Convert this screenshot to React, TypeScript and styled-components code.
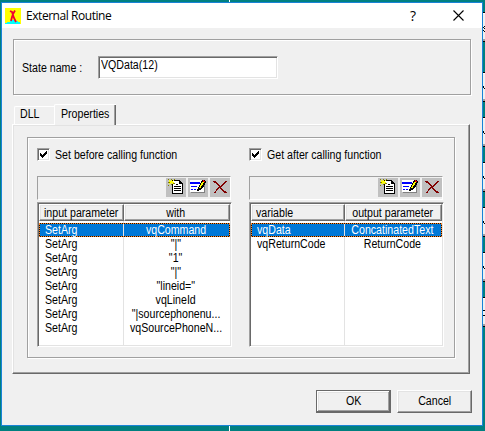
import React from "react";
import styled, { createGlobalStyle, css } from "styled-components";

const GlobalStyle = createGlobalStyle`
  html, body { margin: 0; padding: 0; overflow: hidden; }
  * { box-sizing: border-box; }
`;

const etched = css`
  border: 1px solid #a0a0a0;
  box-shadow: inset 1px 1px 0 #fff, 1px 1px 0 #fff;
`;

const sunken = css`
  border: 1px solid;
  border-color: #a0a0a0 #fff #fff #a0a0a0;
  box-shadow: inset 1px 1px 0 #696969, inset -1px -1px 0 #e3e3e3;
`;

const Desktop = styled.div`
  display: flex;
  width: 485px;
  height: 431px;
  overflow: hidden;
  padding-left: 1px;
  background: linear-gradient(#fff, #fff) 229px 0 / 1px 100% no-repeat #008080;
  font-family: "Liberation Sans", Arial, sans-serif;
  font-size: 12px;
  color: #000;
`;

const Dialog = styled.div`
  width: 482px;
  height: 424px;
  margin-top: 2px;
  flex: none;
  border: 1px solid #1883d7;
  background: #f0f0f0;
`;

const Strip = styled.div`
  width: 2px;
  flex: none;
  overflow: hidden;
`;

const Sliver = styled.div<{ $gap: number }>`
  height: 30px;
  margin-top: ${(p) => p.$gap}px;
  border: solid #000;
  border-width: 1px 0;
  background: #f0f0f0;
  box-shadow: inset 0 1px 0 #fff, inset 0 -2px 0 #a0a0a0;
  svg { display: block; margin-top: 11px; }
`;

const TitleBar = styled.div`
  display: flex;
  align-items: center;
  height: 25px;
  padding: 0 18px 0 3px;
  background: #fff;
  svg { flex: none; }
`;

const Title = styled.span`
  margin: 0 auto 0 5px;
  font: 12px/16px "Open Sans", sans-serif;
  letter-spacing: -0.45px;
`;

const Help = styled.span`
  width: 7px;
  margin-right: 36px;
  font: 14px/16px "Open Sans", sans-serif;
`;

const Text = styled.span<{ $center?: boolean }>`
  display: inline-block;
  white-space: pre;
  line-height: 14px;
  transform: scaleX(0.885);
  transform-origin: ${(p) => (p.$center ? "50%" : "0")} 50%;
`;

const StateGroup = styled.div`
  ${etched}
  display: flex;
  width: 458px;
  height: 56px;
  margin: 11px 0 0 11px;
  padding: 16px 0 0 8px;
`;

const StateLabel = styled.div`
  display: flex;
  width: 76px;
  padding-top: 5px;
`;

const Field = styled.div`
  ${sunken}
  display: flex;
  width: 180px;
  height: 23px;
  padding: 1px 2px 0;
  background: #fff;
`;

const Tabs = styled.div`
  display: flex;
  align-items: flex-end;
  height: 20px;
  margin: 9px 0 0 12px;
`;

const Tab = styled.div<{ $active?: boolean }>`
  width: ${(p) => (p.$active ? 62 : 40)}px;
  height: ${(p) => (p.$active ? 21 : 18)}px;
  margin-bottom: ${(p) => (p.$active ? -1 : 0)}px;
  padding: ${(p) => (p.$active ? "2px 0 0 6px" : "0 0 0 5px")};
  border: solid #fff;
  border-width: 1px 0 0 1px;
  border-radius: 2px 0 0 0;
  background: #f0f0f0;
  z-index: ${(p) => (p.$active ? 1 : 0)};
  box-shadow: ${(p) => (p.$active ? "inset -1px 0 #696969, inset -2px 0 #a0a0a0" : "none")};
`;

const Pane = styled.div`
  width: 458px;
  height: 250px;
  margin-left: 10px;
  padding: 12px 0 0 14px;
  border: 1px solid;
  border-color: #fff #696969 #696969 #fff;
  box-shadow: inset -1px -1px 0 #a0a0a0, inset 1px 1px 0 #e3e3e3;
`;

const MappingGroup = styled.div`
  ${etched}
  display: flex;
  gap: 17px;
  width: 428px;
  height: 221px;
  padding: 10px 0 0 9px;
`;

const Column = styled.div`
  width: 195px;
`;

const CheckRow = styled.div`
  display: flex;
  align-items: flex-start;
  gap: 5px;
  height: 28px;
`;

const CheckBox = styled.div`
  ${sunken}
  width: 13px;
  height: 13px;
  background: #fff;
  svg { display: block; margin: 2px; }
`;

const Toolbar = styled.div`
  display: flex;
  justify-content: flex-end;
  gap: 2px;
  width: 194px;
  height: 24px;
  padding-top: 1px;
  border: 1px solid;
  border-color: #a0a0a0 #fff #fff #a0a0a0;
`;

const Tool = styled.div`
  width: 20px;
  height: 19px;
  background: #c0c0c0;
  svg { display: block; }
`;

const Table = styled.div`
  ${sunken}
  height: 145px;
  margin-top: 2px;
  padding: 1px;
  background: #fff;
`;

const Grid = styled.div<{ $first: number }>`
  display: grid;
  grid-template-columns: ${(p) => p.$first}px 1fr;
  grid-template-rows: 19px;
  grid-auto-rows: 14px;
  height: 141px;
  background: linear-gradient(#e3e3e3, #e3e3e3) ${(p) => p.$first - 1}px 0 / 1px 100% no-repeat;
`;

const Head = styled.div<{ $left?: boolean }>`
  display: flex;
  justify-content: ${(p) => (p.$left ? "flex-start" : "center")};
  min-width: 0;
  height: 17px;
  padding: ${(p) => (p.$left ? "1px 0 0 4px" : "1px 2px 0 0")};
  background: #f0f0f0;
  border: 1px solid;
  border-color: #fff #696969 #696969 #fff;
  box-shadow: inset -1px -1px 0 #a0a0a0, inset 1px 1px 0 #e3e3e3;
`;

const Row = styled.div<{ $selected?: boolean; $first: number }>`
  grid-column: 1 / -1;
  display: grid;
  grid-template-columns: ${(p) => p.$first}px 1fr;
  ${(p) =>
    p.$selected &&
    css`
      color: #fff;
      background: linear-gradient(#e3e3e3, #e3e3e3) ${p.$first - 1}px 0 / 1px 100% no-repeat #0078d7;
      box-shadow: inset 0 0 0 1px #201000;
      outline: 1px dotted #ff8728;
      outline-offset: -1px;
    `}
`;

const Cell = styled.div<{ $center?: boolean }>`
  display: flex;
  justify-content: ${(p) => (p.$center ? "center" : "flex-start")};
  min-width: 0;
  padding: ${(p) => (p.$center ? "0 2px 0 0" : "0 0 0 6px")};
`;

const Footer = styled.div`
  display: flex;
  gap: 6px;
  margin: 16px 0 0 314px;
`;

const Button = styled.button<{ $primary?: boolean }>`
  width: 75px;
  height: 23px;
  padding: 0 0 2px;
  border: 1px solid;
  border-radius: 0;
  border-color: ${(p) => (p.$primary ? "#696969" : "#fff #696969 #696969 #fff")};
  box-shadow: ${(p) =>
    p.$primary
      ? "inset -1px -1px 0 #696969, inset 1px 1px 0 #fff, inset -2px -2px 0 #a0a0a0, inset 2px 2px 0 #e3e3e3"
      : "inset -1px -1px 0 #a0a0a0, inset 1px 1px 0 #e3e3e3"};
  background: #f0f0f0;
  color: #000;
  font: 12px/14px "Liberation Sans", sans-serif;
`;

const AppIcon = () => (
  <svg width="16" height="16" viewBox="0 0 16 16">
    <path fill="#ff0" d="M0 0h16v16H0z" />
    <path fill="#0ff" d="M0 16v-1h2v-1h3v-2h6v1h2v1h2v2z" />
    <path d="M5 3l2 1 1 3 1 3 2 4M10 2.500L8 6 7 9l-1 4" stroke="#f00030" strokeWidth="1.800" fill="none" />
  </svg>
);

const CloseIcon = () => (
  <svg width="11" height="11" viewBox="0 0 11 11">
    <path d="M.5.5l10 10M10.5.5l-10 10" stroke="#000" strokeWidth="1.1" />
  </svg>
);

const Check = () => (
  <svg width="7" height="7" viewBox="0 0 7 7" shapeRendering="crispEdges">
    <path d="M0 2h1v1h1v1h1V3h1V2h1V1h1V0h1v3H6v1H5v1H4v1H3v1H2V6H1V5H0z" />
  </svg>
);

const NewIcon = () => (
  <svg width="20" height="19" viewBox="0 0 20 19" shapeRendering="crispEdges">
    <path d="M6 2h8v1h1v1h1v1h1v11H6z" />
    <path fill="#fff" d="M7 3h6v3h3v9H7z" />
    <path d="M10 6h2v1h-2zM8 8h7v1H8zM8 10h7v1H8zM8 12h7v1H8z" />
    <path fill="#808000" d="M2 1h1v1H2zM5 1h1v2H5zM8 1h1v1H8zM2 4h2v1H2zM7 5h2v1H7zM5 6h1v1H5zM2 7h1v1H2z" />
    <path fill="#ff0" d="M3 2h1v1h1V2h1v1h1V2h1v1H7v1h1v1H7v1H6V5H5v1H3V5h1V4H3z" />
  </svg>
);

const EditIcon = () => (
  <svg width="20" height="19" viewBox="0 0 20 19" shapeRendering="crispEdges">
    <path fill="#808080" d="M3 3h14v12H3z" />
    <path fill="#fff" d="M2 2h14v12H2z" />
    <path fill="#00f" d="M2 4h10v2H2zM3 8h6v1H3zM3 11h2v1H3zM6 11h2v1H6z" />
    <path d="M14 2h3v1h1v2h-1v2h-1v2h-1v1h-1v1h-1v1h-2v1H9v-2h1V9h1V7h1V5h1V3h1z" />
    <path fill="#ff0" d="M14 4h2v1h-1v2h-1v1h-1v2h-2V9h1V7h1V5h1z" />
    <path fill="#f00" d="M15 2h1v1h1v1h-2z" />
  </svg>
);

const DeleteIcon = () => (
  <svg width="20" height="19" viewBox="0 0 20 19" shapeRendering="crispEdges">
    <path
      fill="#800000"
      d="M3 3h3v1h1v1h1v1h1v1h1v1h1V7h1V6h1V5h1V4h1V3h2v1h-1v1h-1v1h-1v1h-1v1h-1v1h-1v1h1v1h1v1h1v1h2v1h1v1h-3v-1h-1v-1h-1v-1h-1v-1h-1v-1h-1v1H8v1H7v1H6v2H4v-1h1v-1h1v-2h1v-1h1v-1h1V8H8V7H7V6H6V5H4V4H3z"
    />
  </svg>
);

const EdgeMark = ({ d }: { d: string }) => (
  <svg width="2" height="8" viewBox="0 0 2 8" shapeRendering="crispEdges">
    <path d={d} />
  </svg>
);

type Panel = {
  label: string;
  first: number;
  heads: [string, string];
  rows: [string, string][];
};

const panels: Panel[] = [
  {
    label: "Set before calling function",
    first: 85,
    heads: ["input parameter", "with"],
    rows: [
      ["SetArg", "vqCommand"],
      ["SetArg", '"|"'],
      ["SetArg", '"1"'],
      ["SetArg", '"|"'],
      ["SetArg", '"lineid="'],
      ["SetArg", "vqLineId"],
      ["SetArg", '"|sourcephonenu...'],
      ["SetArg", "vqSourcePhoneN..."],
    ],
  },
  {
    label: "Get after calling function",
    first: 94,
    heads: ["variable", "output parameter"],
    rows: [
      ["vqData", "ConcatinatedText"],
      ["vqReturnCode", "ReturnCode"],
    ],
  },
];

const curved = "M1 2h1v1H1zM0 3h1v1H0zM1 4h1v1H1zM0 6h1v1H0zM1 7h1v1H1z";
const slanted = "M0 2h1v2H0zM1 4h1v1H1z";
const barred = "M0 1h2v1H0zM0 6h2v1H0z";

const slivers: [number, string][] = [
  [12, curved],
  [30, slanted],
  [15, slanted],
  [15, slanted],
  [15, slanted],
  [15, slanted],
  [15, barred],
];

export default function App() {
  return (
    <>
      <GlobalStyle />
      <Desktop>
        <Dialog>
          <TitleBar>
            <AppIcon />
            <Title>External Routine</Title>
            <Help>?</Help>
            <CloseIcon />
          </TitleBar>
          <StateGroup>
            <StateLabel>
              <Text>State name :</Text>
            </StateLabel>
            <Field>
              <Text>VQData(12)</Text>
            </Field>
          </StateGroup>
          <Tabs>
            <Tab>
              <Text>DLL</Text>
            </Tab>
            <Tab $active>
              <Text>Properties</Text>
            </Tab>
          </Tabs>
          <Pane>
            <MappingGroup>
              {panels.map((p) => (
                <Column key={p.label}>
                  <CheckRow>
                    <CheckBox>
                      <Check />
                    </CheckBox>
                    <Text>{p.label}</Text>
                  </CheckRow>
                  <Toolbar>
                    <Tool><NewIcon /></Tool>
                    <Tool><EditIcon /></Tool>
                    <Tool><DeleteIcon /></Tool>
                  </Toolbar>
                  <Table>
                    <Grid $first={p.first}>
                      <Head $left>
                        <Text>{p.heads[0]}</Text>
                      </Head>
                      <Head>
                        <Text $center>{p.heads[1]}</Text>
                      </Head>
                      {p.rows.map(([name, value], i) => (
                        <Row key={i} $first={p.first} $selected={i === 0}>
                          <Cell>
                            <Text>{name}</Text>
                          </Cell>
                          <Cell $center>
                            <Text $center>{value}</Text>
                          </Cell>
                        </Row>
                      ))}
                    </Grid>
                  </Table>
                </Column>
              ))}
            </MappingGroup>
          </Pane>
          <Footer>
            <Button $primary>
              <Text $center>OK</Text>
            </Button>
            <Button>
              <Text $center>Cancel</Text>
            </Button>
          </Footer>
        </Dialog>
        <Strip>
          {slivers.map(([gap, mark], i) => (
            <Sliver key={i} $gap={gap}>
              <EdgeMark d={mark} />
            </Sliver>
          ))}
        </Strip>
      </Desktop>
    </>
  );
}
